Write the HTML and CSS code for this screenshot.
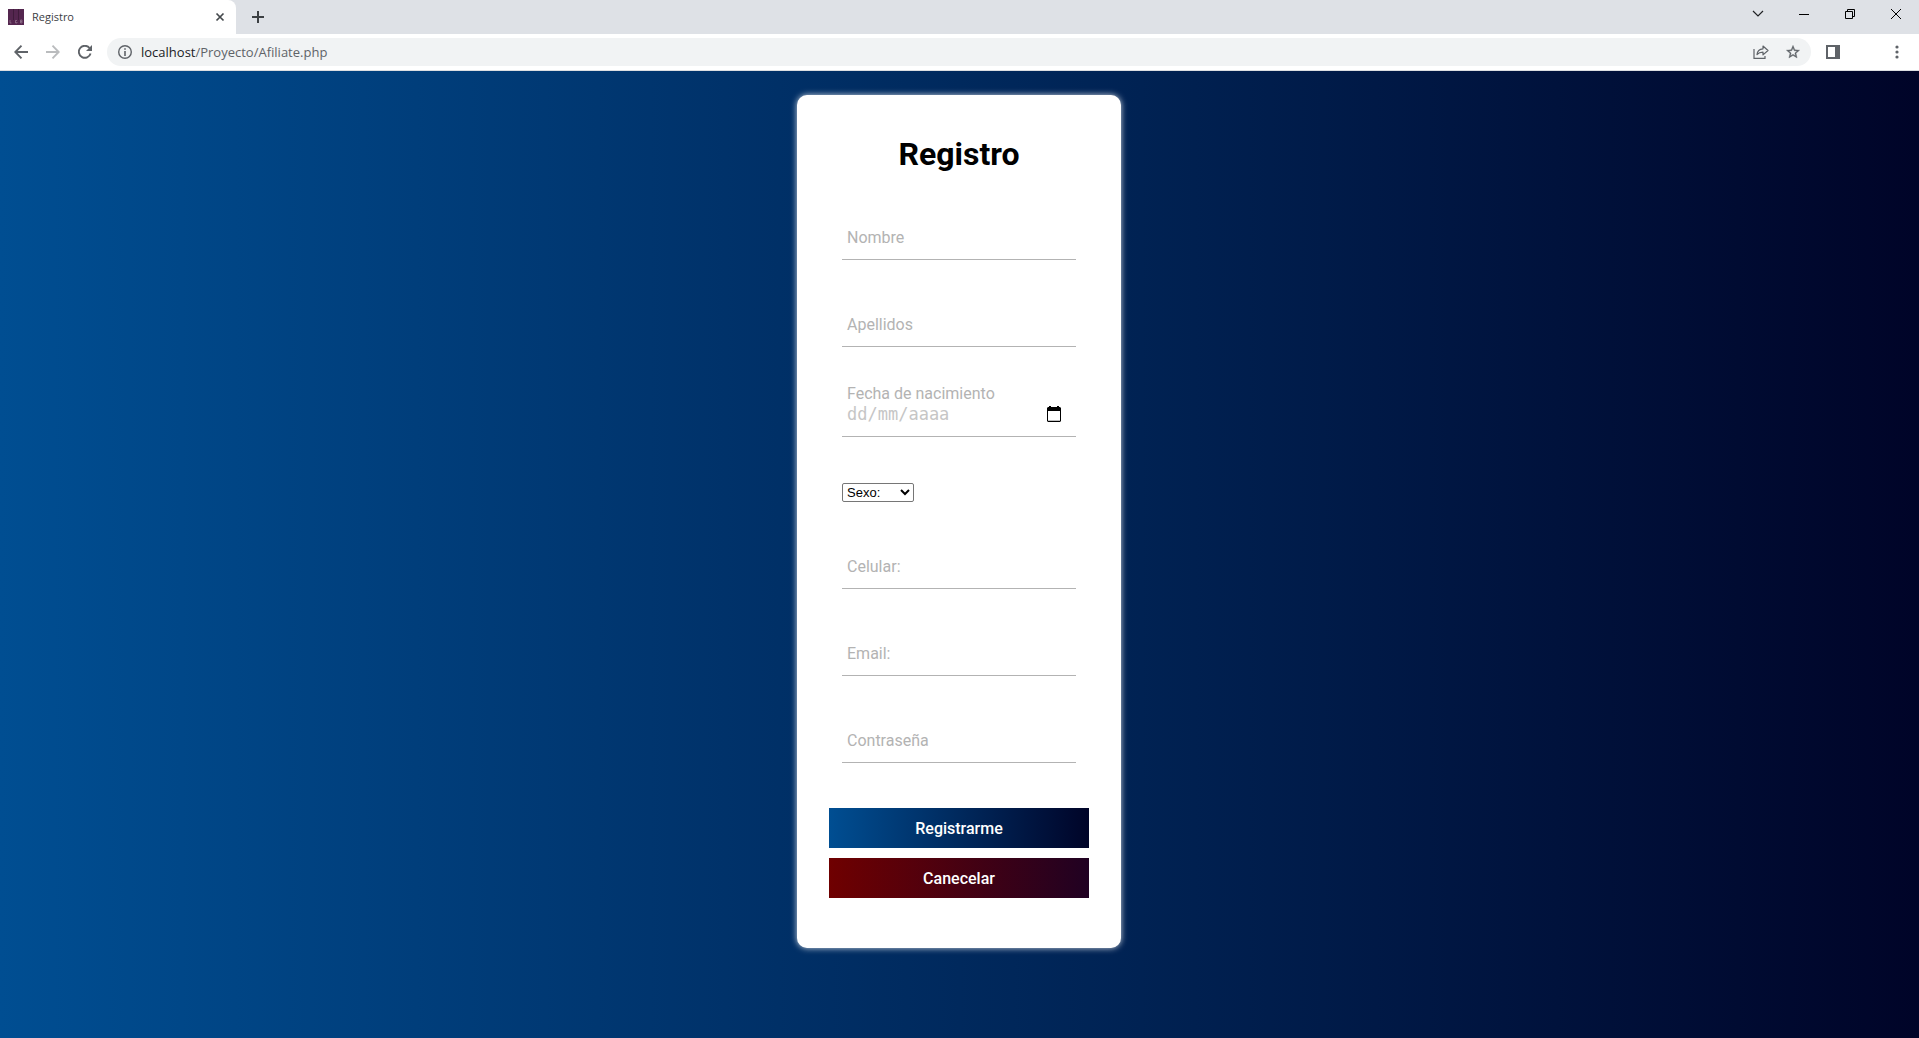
FILE: index.html
```html
<!DOCTYPE html>
<html lang="es">
<head>
<meta charset="utf-8">
<title>Registro</title>
<link rel="stylesheet" href="styles.css">
</head>
<body>
<header class="browser">
  <div class="tabstrip">
    <div class="tab">
      <svg class="favicon" width="16" height="16" viewBox="0 0 16 16" aria-hidden="true"><path fill="#54264f" d="M0 0h16v16H0z"/><path stroke="#3f1b3b" d="M5.500 0v11M10.500 0v11"/><path fill="none" stroke="#a58aa0" stroke-width=".6" d="M2 11v3h1.500M9 11.500H7.500v2.500H9v-1M12.500 11v3h1.500v-1.500h-1.500M12.500 11h1.500v1.500"/></svg>
      <span class="tab-title">Registro</span>
      <button class="icon-btn tab-close" aria-label="Cerrar pestaña"><svg width="10" height="10" viewBox="0 0 10 10"><path stroke="#45494d" stroke-width="1.700" d="M1.500 1.500l7 7M8.500 1.500l-7 7"/></svg></button>
    </div>
    <button class="icon-btn new-tab" aria-label="Nueva pestaña"><svg width="12" height="12" viewBox="0 0 12 12"><path stroke="#3c4043" stroke-width="2" d="M6 0v12M0 6h12"/></svg></button>
    <div class="window-controls">
      <button class="window-btn" aria-label="Buscar pestañas"><svg width="12" height="12" viewBox="0 0 12 12"><path fill="none" stroke="#202124" stroke-width="1.200" d="M1 3l5 5 5-5"/></svg></button>
      <button class="window-btn" aria-label="Minimizar"><svg width="10" height="10" viewBox="0 0 10 10"><path fill="#000" d="M0 5h10v1H0z"/></svg></button>
      <button class="window-btn" aria-label="Restaurar"><svg width="10" height="10" viewBox="0 0 10 10"><path fill="none" stroke="#000" d="M.5 2.500h7v7h-7zM2.500 2.500v-2h7v7h-2"/></svg></button>
      <button class="window-btn" aria-label="Cerrar"><svg width="10" height="10" viewBox="0 0 10 10"><path stroke="#000" d="M0 0l10 10M10 0L0 10"/></svg></button>
    </div>
  </div>
  <div class="toolbar">
    <button class="icon-btn" aria-label="Atrás"><svg width="14" height="14" viewBox="0 0 14 14"><path fill="none" stroke="#5f6368" stroke-width="1.900" d="M14 7H1.500M7.500.7L1.300 7l6.200 6.300"/></svg></button>
    <button class="icon-btn" aria-label="Adelante"><svg width="14" height="14" viewBox="0 0 14 14"><path fill="none" stroke="#babcbe" stroke-width="1.900" d="M0 7h12.500M6.500.7L12.700 7l-6.200 6.300"/></svg></button>
    <button class="icon-btn" aria-label="Recargar"><svg width="14" height="14" viewBox="0 0 14 14"><path fill="none" stroke="#5f6368" stroke-width="1.900" d="M12.600 8.500A6 6 0 1 1 11.500 3"/><path fill="#5f6368" d="M14 0v6H8z"/></svg></button>
    <div class="omnibox">
      <svg width="14" height="14" viewBox="0 0 14 14" aria-hidden="true"><circle cx="7" cy="7" r="6.300" fill="none" stroke="#5f6368" stroke-width="1.400"/><path fill="#5f6368" d="M6.200 3.200h1.600v1.600H6.200zM6.200 6h1.600v5H6.200z"/></svg>
      <span class="url"><b>localhost</b>/Proyecto/Afiliate.php</span>
      <button class="icon-btn" aria-label="Compartir"><svg width="16" height="14" viewBox="0 0 16 14"><path fill="none" stroke="#5f6368" stroke-width="1.200" d="M1 4v9.400h11V11"/><path fill="none" stroke="#5f6368" stroke-width="1.200" stroke-linejoin="round" d="M4 9.500C4.300 6 6.500 4 10 3.800V1l5 4.500-5 4.400V7.200C7.500 7.200 5.500 7.800 4 9.500z"/></svg></button>
      <button class="icon-btn" aria-label="Añadir a marcadores"><svg width="16" height="16" viewBox="0 0 24 24"><path fill="#5f6368" stroke="#5f6368" stroke-width=".5" d="M22 9.240l-7.190-.62L12 2 9.190 8.630 2 9.240l5.460 4.730L5.820 21 12 17.270 18.180 21l-1.630-7.030L22 9.240zM12 15.400l-3.760 2.270 1-4.280-3.320-2.880 4.380-.38L12 6.100l1.710 4.040 4.380.38-3.320 2.880 1 4.280L12 15.400z"/></svg></button>
    </div>
    <button class="icon-btn" aria-label="Panel lateral"><svg width="14" height="14" viewBox="0 0 14 14"><path fill="#5f6368" fill-rule="evenodd" d="M0 0h14v14H0zM2 2v10h7V2z"/></svg></button>
    <button class="icon-btn menu" aria-label="Menú"><svg width="4" height="14" viewBox="0 0 4 14"><g fill="#5f6368"><circle cx="2" cy="2" r="1.600"/><circle cx="2" cy="7" r="1.600"/><circle cx="2" cy="12" r="1.600"/></g></svg></button>
  </div>
</header>
<main class="page">
  <form class="card">
    <h1 class="title">Registro</h1>
    <div class="fields">
      <div class="field"><label for="nombre">Nombre</label><input id="nombre" type="text"></div>
      <div class="field"><label for="apellidos">Apellidos</label><input id="apellidos" type="text"></div>
      <div class="date-field">
        <label for="fecha">Fecha de nacimiento</label>
        <div class="date-row">
          <input id="fecha" type="text" placeholder="dd/mm/aaaa">
          <button type="button" class="icon-btn calendar" aria-label="Abrir calendario"><svg width="14" height="16" viewBox="0 0 14 16"><path fill="#000" fill-rule="evenodd" d="M2 0h2v1h6V0h2v1h1l1 1v13l-1 1H1l-1-1V2l1-1h1zM1 5v9.700h12V5z"/></svg></button>
        </div>
      </div>
      <select class="sexo" aria-label="Sexo"><option>Sexo:</option><option>Hombre</option><option>Mujer</option></select>
      <div class="field"><label for="celular">Celular:</label><input id="celular" type="tel"></div>
      <div class="field"><label for="email">Email:</label><input id="email" type="email"></div>
      <div class="field"><label for="clave">Contraseña</label><input id="clave" type="password"></div>
    </div>
    <div class="actions">
      <button class="action submit" type="submit">Registrarme</button>
      <button class="action cancel" type="button">Canecelar</button>
    </div>
  </form>
</main>
</body>
</html>
```
FILE: styles.css
```css
* { box-sizing: border-box; }

body {
  margin: 0;
  min-height: 100vh;
  display: flex;
  flex-direction: column;
  font-family: Roboto, sans-serif;
  font-size: 16px;
}

button { font: inherit; border: 0; padding: 0; background: none; }

/* Browser frame */
.browser { font-family: "Open Sans", "Noto Sans", sans-serif; border-bottom: 1px solid #dcdee1; background: #fff; }
.tabstrip { display: flex; height: 34px; background: #dee1e6; }
.tab {
  display: flex;
  align-items: center;
  gap: 8px;
  width: 236px;
  padding: 0 6px 0 8px;
  background: #fff;
  border-radius: 0 8px 0 0;
}
.tab-title { flex: 1; padding-bottom: 2px; font-size: 11px; color: #3c4043; }
.icon-btn { display: flex; align-items: center; justify-content: center; flex: none; width: 28px; height: 28px; }
.tab-close { width: 20px; }
.new-tab { margin: 3px 8px; }
.window-controls { display: flex; margin-left: auto; }
.window-btn { display: flex; align-items: center; justify-content: center; width: 46px; height: 28px; }

.toolbar { display: flex; align-items: center; gap: 4px; height: 36px; padding: 0 8px 0 7px; }
.omnibox {
  display: flex;
  align-items: center;
  flex: 1;
  gap: 4px;
  height: 28px;
  margin: 0 4px;
  padding: 0 4px 0 11px;
  border-radius: 14px;
  background: #f1f3f4;
}
.url { flex: 1; padding-left: 5px; font-size: 13px; color: #5f6368; }
.url b { font-weight: 400; color: #202124; }
.menu { margin-left: 32px; }

/* Registration page */
.page {
  flex: 1;
  padding: 24px 25px 24px 24px;
  background: linear-gradient(to right, #004e92, #000428);
}
.card {
  width: 324px;
  margin: 0 auto;
  padding: 40px 32px 50px;
  background: #fff;
  border-radius: 10px;
  box-shadow: 0 0 6px rgba(255, 255, 255, .8);
}
.title { margin: 0 0 47px; font-size: 32px; line-height: 38px; text-align: center; }
.fields { display: flex; flex-direction: column; align-items: stretch; padding: 0 13px; }

.field { display: grid; height: 40px; margin-bottom: 47px; }
.field:last-child { margin-bottom: 45px; }
.field label, .field input { grid-area: 1 / 1; }
.field label { padding: 8px 0 0 5px; line-height: 20px; color: #b3b3b3; pointer-events: none; z-index: 1; }
.field input {
  width: 100%;
  min-width: 0;
  padding: 10px 10px 10px 5px;
  border: 0;
  border-bottom: 1px solid #b3b3b3;
  background: none;
  font: inherit;
}

.date-field { display: flex; flex-direction: column; margin: -10px 0 46px; color: #b3b3b3; }
.date-field label { padding-left: 5px; line-height: 20px; }
.date-row { display: flex; height: 33px; padding: 0 8px 12px 5px; border-bottom: 1px solid #b3b3b3; }
.date-row input {
  flex: 1;
  min-width: 0;
  padding: 0;
  border: 0;
  background: none;
  font: 17px/20px "DejaVu Sans Mono", monospace;
}
.date-row input::placeholder { color: #c6c6c6; }
.calendar { height: 20px; }

.sexo {
  align-self: flex-start;
  width: 72px;
  height: 19px;
  margin-bottom: 47px;
  font: 13px "Liberation Sans", Arial, sans-serif;
  color: #000;
  background: #fff;
  border: 1px solid #767676;
  border-radius: 2px;
}

.actions { display: flex; flex-direction: column; gap: 10px; }
.action { height: 40px; font-size: 16px; font-weight: 500; color: #fff; }
.submit { background: linear-gradient(to right, #004e92, #000428); }
.cancel { background: linear-gradient(to right, #6f0000, #200122); }
```
